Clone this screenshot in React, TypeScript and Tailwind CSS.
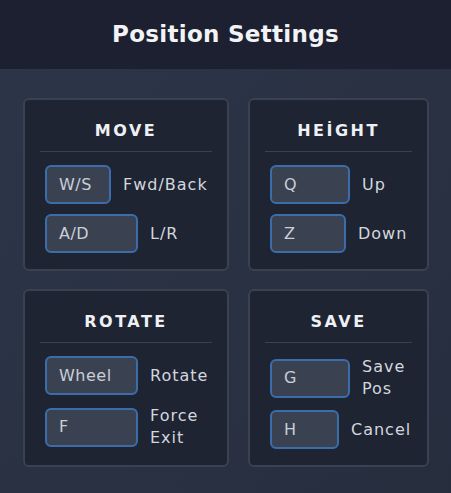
import React from 'react';

type Bind = { key: string; label: string[]; w: string };

const cards: { title: string; width: string; binds: Bind[] }[] = [
  {
    title: 'MOVE',
    width: 'w-[206px]',
    binds: [
      { key: 'W/S', label: ['Fwd/Back'], w: 'w-[66px]' },
      { key: 'A/D', label: ['L/R'], w: 'w-[93px]' },
    ],
  },
  {
    title: 'HEİGHT',
    width: 'w-[181px]',
    binds: [
      { key: 'Q', label: ['Up'], w: 'w-[80px]' },
      { key: 'Z', label: ['Down'], w: 'w-[76px]' },
    ],
  },
  {
    title: 'ROTATE',
    width: 'w-[206px]',
    binds: [
      { key: 'Wheel', label: ['Rotate'], w: 'w-[93px]' },
      { key: 'F', label: ['Force', 'Exit'], w: 'w-[93px]' },
    ],
  },
  {
    title: 'SAVE',
    width: 'w-[181px]',
    binds: [
      { key: 'G', label: ['Save', 'Pos'], w: 'w-[80px]' },
      { key: 'H', label: ['Cancel'], w: 'w-[69px]' },
    ],
  },
];

const Card: React.FC<{ title: string; width: string; binds: Bind[] }> = ({ title, width, binds }) => (
  <div className={`${width} rounded-[6px] border-2 border-[#3a4150] bg-[#1e2432] px-[15px] pt-[21px] pb-[16px]`}>
    <div className="text-center text-[16px] leading-5 font-bold tracking-[2.5px] text-[#eef0f3]">{title}</div>
    <div className="mt-[10px] h-px bg-[#3a4150]" />
    <div className="mt-[13px] flex flex-col gap-[10px] pl-[5px]">
      {binds.map((b) => (
        <div key={b.key} className="flex items-center">
          <div
            className={`${b.w} flex h-[39px] shrink-0 items-center rounded-[6px] border-2 border-[#3c6dab] bg-[#3a4252] pl-[12px] text-[16px] tracking-[0.5px] text-[#c9ced7]`}
          >
            {b.key}
          </div>
          <div className="ml-[12px] text-[16px] leading-[22px] tracking-[1px] text-[#d3d7de]">
            {b.label.map((l) => (
              <div key={l}>{l}</div>
            ))}
          </div>
        </div>
      ))}
    </div>
  </div>
);

export default function App() {
  return (
    <div className="h-[493px] w-[451px] overflow-hidden bg-gradient-to-br from-[#2d3649] to-[#262e3e] font-['DejaVu_Sans',sans-serif]">
      <header className="flex h-[69px] items-center justify-center bg-[#1c2030]">
        <h1 className="text-[23px] font-bold tracking-[0.3px] text-[#f2f3f5]">Position Settings</h1>
      </header>
      <main className="grid grid-cols-[206px_181px] gap-x-[19px] gap-y-[18px] px-[23px] pt-[29px]">
        {cards.map((c) => (
          <Card key={c.title} {...c} />
        ))}
      </main>
    </div>
  );
}
